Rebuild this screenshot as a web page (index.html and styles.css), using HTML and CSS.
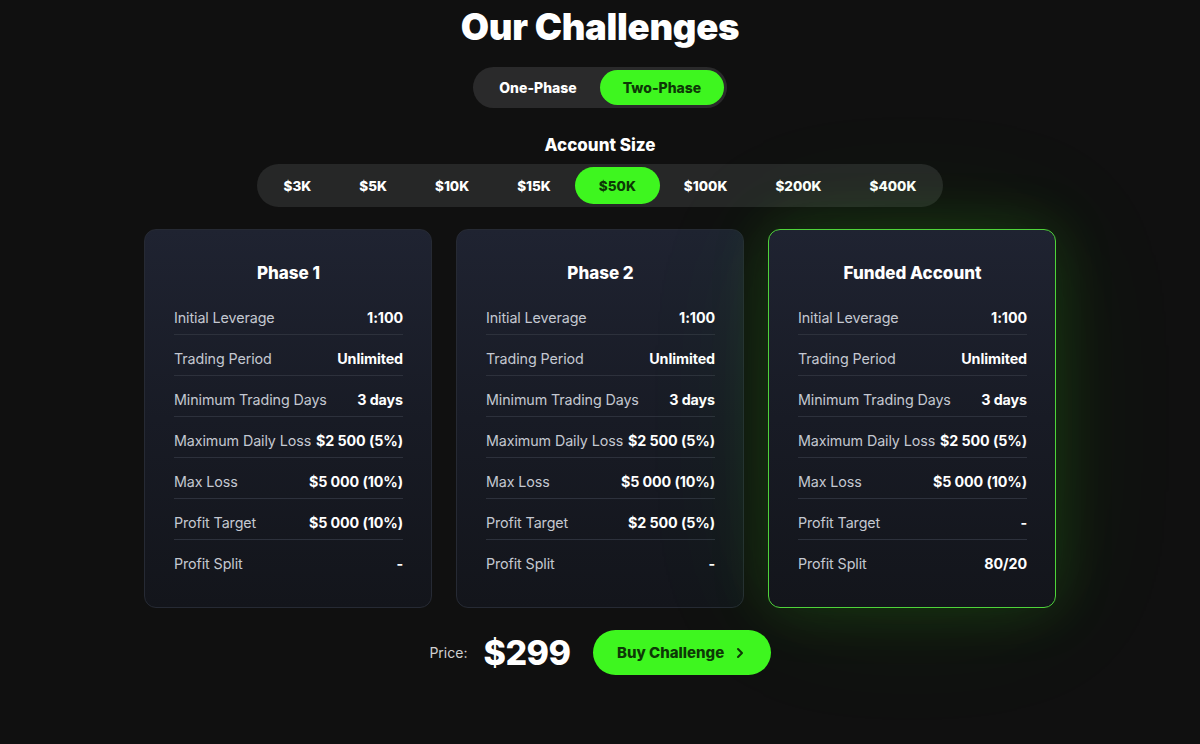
FILE: index.html
```html
<!DOCTYPE html>
<html lang="en">
<head>
<meta charset="utf-8">
<title>Our Challenges</title>
<link rel="stylesheet" href="styles.css">
</head>
<body>
<main class="page">
  <h1 class="title">Our Challenges</h1>

  <div class="toggle">
    <button class="toggle-btn">One-Phase</button>
    <button class="toggle-btn active">Two-Phase</button>
  </div>

  <h2 class="size-label">Account Size</h2>
  <div class="sizes">
    <button class="size">$3K</button>
    <button class="size">$5K</button>
    <button class="size">$10K</button>
    <button class="size">$15K</button>
    <button class="size active">$50K</button>
    <button class="size">$100K</button>
    <button class="size">$200K</button>
    <button class="size">$400K</button>
  </div>

  <section class="cards">
    <article class="card">
      <h3 class="card-title">Phase 1</h3>
      <div class="row"><span class="label">Initial Leverage</span><span class="value">1:100</span></div>
      <div class="row"><span class="label">Trading Period</span><span class="value">Unlimited</span></div>
      <div class="row"><span class="label">Minimum Trading Days</span><span class="value">3 days</span></div>
      <div class="row"><span class="label">Maximum Daily Loss</span><span class="value">$2 500 (5%)</span></div>
      <div class="row"><span class="label">Max Loss</span><span class="value">$5 000 (10%)</span></div>
      <div class="row"><span class="label">Profit Target</span><span class="value">$5 000 (10%)</span></div>
      <div class="row last"><span class="label">Profit Split</span><span class="value">-</span></div>
    </article>
    <article class="card">
      <h3 class="card-title">Phase 2</h3>
      <div class="row"><span class="label">Initial Leverage</span><span class="value">1:100</span></div>
      <div class="row"><span class="label">Trading Period</span><span class="value">Unlimited</span></div>
      <div class="row"><span class="label">Minimum Trading Days</span><span class="value">3 days</span></div>
      <div class="row"><span class="label">Maximum Daily Loss</span><span class="value">$2 500 (5%)</span></div>
      <div class="row"><span class="label">Max Loss</span><span class="value">$5 000 (10%)</span></div>
      <div class="row"><span class="label">Profit Target</span><span class="value">$2 500 (5%)</span></div>
      <div class="row last"><span class="label">Profit Split</span><span class="value">-</span></div>
    </article>
    <article class="card funded">
      <h3 class="card-title">Funded Account</h3>
      <div class="row"><span class="label">Initial Leverage</span><span class="value">1:100</span></div>
      <div class="row"><span class="label">Trading Period</span><span class="value">Unlimited</span></div>
      <div class="row"><span class="label">Minimum Trading Days</span><span class="value">3 days</span></div>
      <div class="row"><span class="label">Maximum Daily Loss</span><span class="value">$2 500 (5%)</span></div>
      <div class="row"><span class="label">Max Loss</span><span class="value">$5 000 (10%)</span></div>
      <div class="row"><span class="label">Profit Target</span><span class="value">-</span></div>
      <div class="row last"><span class="label">Profit Split</span><span class="value">80/20</span></div>
    </article>
  </section>

  <div class="price-row">
    <span class="price-label">Price:</span>
    <span class="price">$299</span>
    <button class="buy">Buy Challenge
      <svg class="chev" width="12" height="12" viewBox="0 0 12 12" aria-hidden="true"><path d="M4 2 L8 6 L4 10" fill="none" stroke="currentColor" stroke-width="2" stroke-linecap="round" stroke-linejoin="round"/></svg>
    </button>
  </div>
</main>
</body>
</html>
```

FILE: styles.css
```css
* { box-sizing: border-box; }
html, body {
  margin: 0;
  padding: 0;
  background: #101010;
  color: #fff;
  font-family: Inter, "Noto Sans", "DejaVu Sans", sans-serif;
}
.page {
  display: flex;
  flex-direction: column;
  align-items: center;
  width: 1200px;
  height: 744px;
  overflow: hidden;
}
.title {
  margin: 5px 0 0;
  font-size: 36.5px;
  line-height: 44px;
  font-weight: 900;
  letter-spacing: -0.3px;
}
.toggle {
  margin-top: 18px;
  display: flex;
  padding: 3px;
  background: #2a2a2b;
  border-radius: 999px;
}
button {
  font-family: inherit;
  border: 0;
  cursor: pointer;
}
.toggle-btn {
  width: 124px;
  height: 35px;
  border-radius: 999px;
  background: transparent;
  color: #fff;
  font-size: 14px;
  font-weight: 800;
}
.toggle-btn.active {
  background: #3ef61f;
  color: #0d3806;
}
.size-label {
  margin: 26px 0 0;
  font-size: 17px;
  line-height: 22px;
  font-weight: 800;
}
.sizes {
  margin-top: 8px;
  display: flex;
  padding: 3px;
  background: #262727;
  border-radius: 999px;
}
.size {
  height: 37px;
  padding: 0 24px;
  border-radius: 999px;
  background: transparent;
  color: #fff;
  font-size: 13.5px;
  font-weight: 800;
}
.size.active {
  background: #3ef61f;
  color: #0d3806;
}
.cards {
  margin-top: 22px;
  display: grid;
  grid-template-columns: repeat(3, 288px);
  gap: 24px;
}
.card {
  height: 379px;
  padding: 32px 28px 0 29px;
  border-radius: 12px;
  border: 1px solid #262a34;
  background: linear-gradient(180deg, #1f2331 0%, #181b25 50%, #13151b 100%);
}
.card.funded {
  border-color: #4fd43a;
  box-shadow: 0 0 60px rgba(62, 246, 31, 0.16), 0 0 140px rgba(62, 246, 31, 0.08);
}
.card-title {
  margin: 0 0 10px;
  text-align: center;
  font-size: 17px;
  line-height: 22px;
  font-weight: 800;
}
.row {
  display: flex;
  justify-content: space-between;
  align-items: center;
  padding: 14px 0 6px;
  line-height: 20px;
  border-bottom: 1px solid #2d313c;
  font-size: 14.3px;
}
.row.last { border-bottom: 0; }
.label {
  color: #c4c8d1;
  font-weight: 400;
  letter-spacing: -0.1px;
}
.value {
  color: #fff;
  font-weight: 700;
  letter-spacing: -0.1px;
}
.price-row {
  margin-top: 22px;
  display: flex;
  align-items: center;
}
.price-label {
  font-size: 14px;
  color: #d0d0d0;
}
.price {
  margin-left: 16px;
  font-size: 34px;
  font-weight: 800;
  letter-spacing: -0.5px;
}
.buy {
  margin-left: 22px;
  width: 178px;
  height: 45px;
  border-radius: 999px;
  background: #3ef61f;
  color: #0d3806;
  font-size: 15px;
  font-weight: 800;
  display: flex;
  align-items: center;
  justify-content: center;
  gap: 10px;
  padding: 0;
}
.chev { display: block; }
```
